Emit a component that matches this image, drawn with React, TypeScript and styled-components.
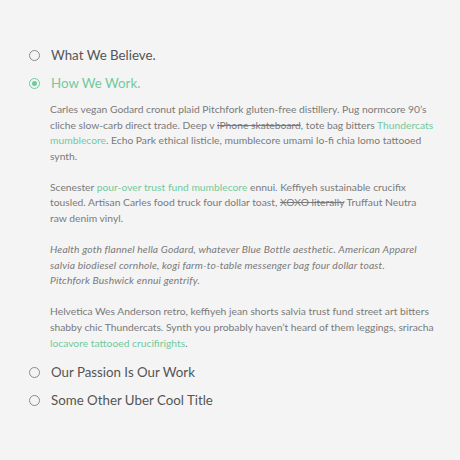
import React from "react";
import styled, { createGlobalStyle } from "styled-components";

const Global = createGlobalStyle`
  html, body { margin: 0; padding: 0; background: #f4f4f4; }
  body { font-family: Lato, "Open Sans", sans-serif; }
`;

const GREEN = "#72c99c";

const Page = styled.div`
  padding: 41px 20px 20px 29px;
  width: 460px;
  box-sizing: border-box;
`;

const Item = styled.div`
  display: flex;
  flex-direction: column;
`;

const Header = styled.div<{ $active?: boolean }>`
  display: flex;
  align-items: center;
  gap: 11px;
  height: 28px;
  font-size: 13.3px;
  color: ${(p) => (p.$active ? GREEN : "#555")};
`;

const Radio = styled.span<{ $active?: boolean }>`
  width: 11px;
  height: 11px;
  box-sizing: border-box;
  border-radius: 50%;
  border: 1.5px solid ${(p) => (p.$active ? GREEN : "#8a8a8a")};
  display: flex;
  align-items: center;
  justify-content: center;
  &::after {
    content: "";
    display: ${(p) => (p.$active ? "block" : "none")};
    width: 5px;
    height: 5px;
    border-radius: 50%;
    background: ${GREEN};
  }
`;

const Body = styled.div`
  padding: 5px 0 7px 21px;
  width: 392px;
  font-size: 10.3px;
  line-height: 15.6px;
  color: #7a7a7a;
`;

const P = styled.p<{ $italic?: boolean }>`
  margin: 0 0 15.5px;
  font-style: ${(p) => (p.$italic ? "italic" : "normal")};
  letter-spacing: ${(p) => (p.$italic ? "0.15px" : "0")};
  &:last-child { margin-bottom: 0; }
`;

const Link = styled.span`
  color: ${GREEN};
`;

const Strike = styled.span`
  text-decoration: line-through;
`;

export default function App() {
  return (
    <>
      <Global />
      <Page>
        <Item>
          <Header><Radio />What We Believe.</Header>
        </Item>
        <Item>
          <Header $active><Radio $active />How We Work.</Header>
          <Body>
            <P>
              Carles vegan Godard cronut plaid Pitchfork gluten-free distillery. Pug normcore 90’s
              cliche slow-carb direct trade. Deep v <Strike>iPhone skateboard</Strike>, tote bag bitters{" "}
              <Link>Thundercats mumblecore</Link>. Echo Park ethical listicle, mumblecore umami lo-fi chia lomo tattooed synth.
            </P>
            <P>
              Scenester <Link>pour-over trust fund mumblecore</Link> ennui. Keffiyeh sustainable crucifix
              tousled. Artisan Carles food truck four dollar toast, <Strike>XOXO literally</Strike> Truffaut Neutra
              <br />
              raw denim vinyl.
            </P>
            <P $italic>
              Health goth flannel hella Godard, whatever Blue Bottle aesthetic. American Apparel
              salvia biodiesel cornhole, kogi farm-to-table messenger bag four dollar toast.
              <br />
              Pitchfork Bushwick ennui gentrify.
            </P>
            <P>
              Helvetica Wes Anderson retro, keffiyeh jean shorts salvia trust fund street art bitters
              shabby chic Thundercats. Synth you probably haven’t heard of them leggings, sriracha{" "}
              <Link>locavore tattooed crucifirights</Link>.
            </P>
          </Body>
        </Item>
        <Item>
          <Header><Radio />Our Passion Is Our Work</Header>
        </Item>
        <Item>
          <Header><Radio />Some Other Uber Cool Title</Header>
        </Item>
      </Page>
    </>
  );
}
